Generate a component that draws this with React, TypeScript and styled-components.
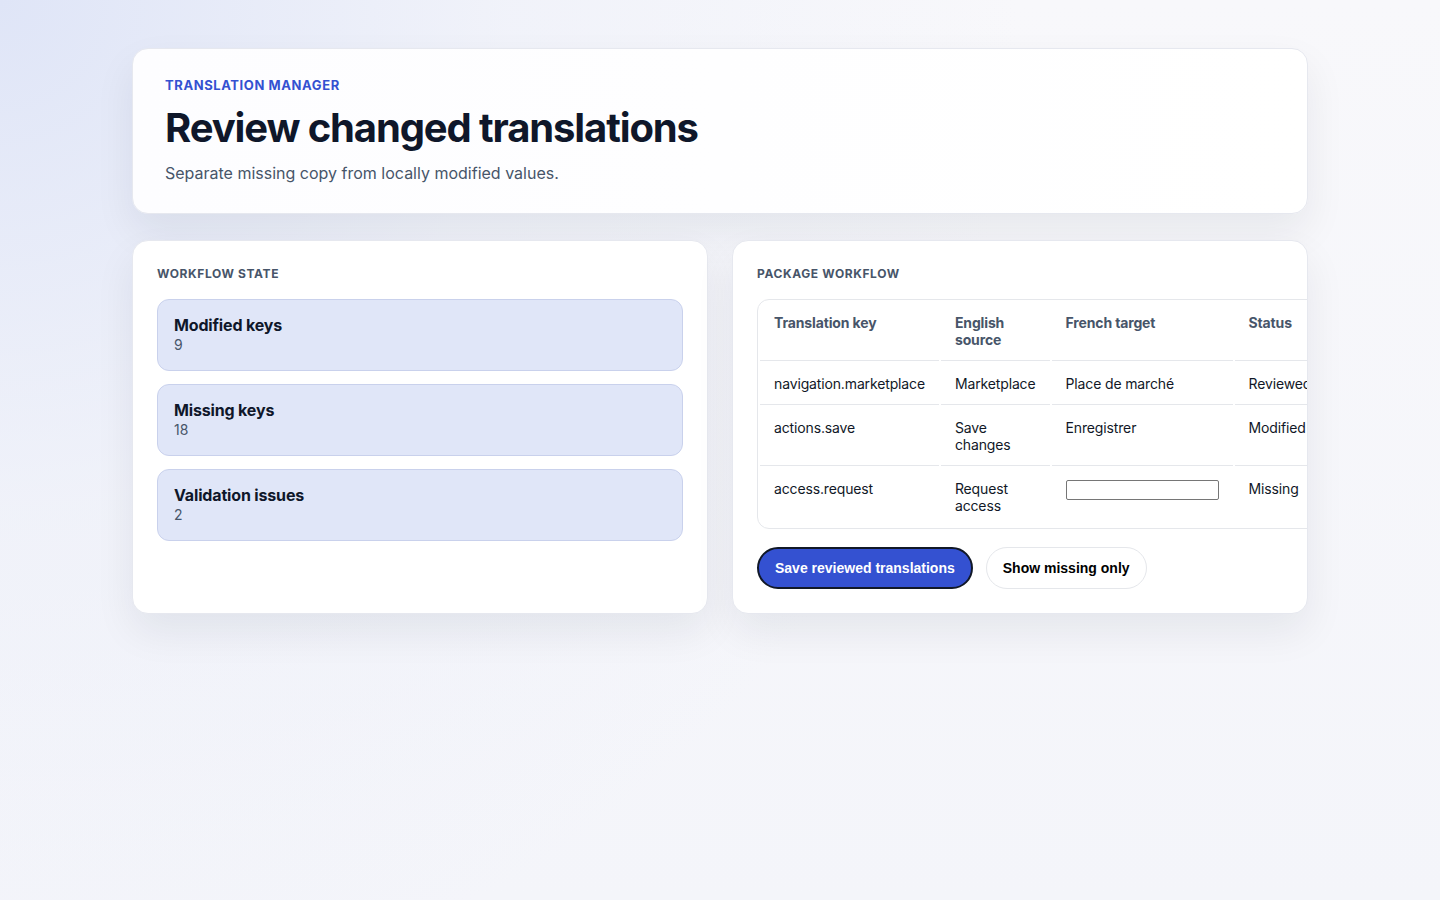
import React from "react";
import styled, { createGlobalStyle } from "styled-components";

const GlobalStyle = createGlobalStyle`
  html, body {
    margin: 0;
    min-height: 100%;
  }
  body {
    min-height: 100vh;
    font-family: Inter, "Noto Sans", Arial, sans-serif;
    color: #0f172a;
    background:
      radial-gradient(circle at 0% 0%, #dfe5f7 0%, rgba(236, 239, 249, 0.6) 30%, rgba(247, 247, 251, 0) 60%),
      linear-gradient(180deg, #f8f8fb 0%, #f4f5fa 100%);
    background-attachment: fixed;
  }
`;

const Page = styled.main`
  max-width: 1176px;
  margin: 0 auto;
  padding: 48px 0;
  display: flex;
  flex-direction: column;
  gap: 26px;
`;

const Card = styled.section`
  background: #ffffff;
  border: 1px solid #e6e8ef;
  border-radius: 16px;
  box-shadow: 0 18px 40px rgba(15, 23, 42, 0.07);
  overflow: hidden;
`;

const Hero = styled(Card)`
  padding: 28px 32px 28px;
  background: linear-gradient(90deg, #fdfdff 0%, #ffffff 100%);
`;

const Eyebrow = styled.div`
  font-size: 13px;
  font-weight: 700;
  letter-spacing: 0.045em;
  text-transform: uppercase;
  color: #3451d1;
  line-height: 16px;
`;

const Title = styled.h1`
  margin: 12px 0 10px;
  font-size: 40px;
  line-height: 46px;
  font-weight: 700;
  letter-spacing: -0.028em;
  color: #0f172a;
`;

const Subtitle = styled.p`
  margin: 0;
  font-size: 16px;
  line-height: 24px;
  color: #475569;
`;

const Columns = styled.div`
  display: grid;
  grid-template-columns: 1fr 1fr;
  gap: 24px;
`;

const Panel = styled(Card)`
  padding: 24px;
  display: flex;
  flex-direction: column;
`;

const PanelHeading = styled.h2`
  margin: 0 0 16px;
  font-size: 12px;
  line-height: 18px;
  font-weight: 700;
  letter-spacing: 0.05em;
  text-transform: uppercase;
  color: #475569;
`;

const StatList = styled.div`
  display: flex;
  flex-direction: column;
  gap: 13px;
`;

const Stat = styled.div`
  background: #e0e6f8;
  border: 1px solid #c9d1ec;
  border-radius: 12px;
  padding: 15px 16px;
`;

const StatLabel = styled.div`
  font-size: 16px;
  line-height: 20px;
  font-weight: 700;
  letter-spacing: -0.01em;
  color: #0f172a;
`;

const StatValue = styled.div`
  font-size: 14px;
  line-height: 20px;
  color: #475569;
`;

const Table = styled.table`
  width: 100%;
  border: 1px solid #e5e7eb;
  border-radius: 12px;
  font-size: 14px;
  line-height: 17px;
  letter-spacing: -0.01em;
  color: #111827;
`;

const Th = styled.th`
  text-align: left;
  vertical-align: top;
  padding: 12px 14px;
  font-weight: 700;
  color: #475569;
  border-bottom: 1px solid #e5e7eb;
`;

const Td = styled.td<{ $last?: boolean }>`
  text-align: left;
  vertical-align: top;
  padding: 12px 14px;
  border-bottom: ${(p) => (p.$last ? "none" : "1px solid #e5e7eb")};
`;

const TargetInput = styled.input`
  box-sizing: border-box;
  width: 153px;
  height: 20px;
  margin: 0;
  border: 1px solid #767676;
  border-radius: 2px;
  padding: 1px 2px;
  font-size: 13px;
  background: #ffffff;
`;

const Actions = styled.div`
  display: flex;
  gap: 13px;
  margin-top: 18px;
`;

const Button = styled.button<{ $primary?: boolean }>`
  height: 42px;
  padding: 0 16px;
  border-radius: 999px;
  font-family: "Liberation Sans", Arial, sans-serif;
  font-size: 14px;
  font-weight: 700;
  cursor: pointer;
  background: ${(p) => (p.$primary ? "#3451d1" : "#ffffff")};
  color: ${(p) => (p.$primary ? "#ffffff" : "#000000")};
  border: ${(p) => (p.$primary ? "2px solid #111827" : "1px solid #e5e7eb")};
`;

const stats = [
  { label: "Modified keys", value: 9 },
  { label: "Missing keys", value: 18 },
  { label: "Validation issues", value: 2 },
];

const rows = [
  { key: "navigation.marketplace", en: "Marketplace", fr: "Place de marché", status: "Reviewed" },
  { key: "actions.save", en: "Save changes", fr: "Enregistrer", status: "Modified" },
  { key: "access.request", en: "Request access", fr: null, status: "Missing" },
];

export default function App() {
  return (
    <>
      <GlobalStyle />
      <Page>
        <Hero>
          <Eyebrow>Translation manager</Eyebrow>
          <Title>Review changed translations</Title>
          <Subtitle>Separate missing copy from locally modified values.</Subtitle>
        </Hero>
        <Columns>
          <Panel>
            <PanelHeading>Workflow state</PanelHeading>
            <StatList>
              {stats.map((s) => (
                <Stat key={s.label}>
                  <StatLabel>{s.label}</StatLabel>
                  <StatValue>{s.value}</StatValue>
                </Stat>
              ))}
            </StatList>
          </Panel>
          <Panel>
            <PanelHeading>Package workflow</PanelHeading>
            <Table>
              <thead>
                <tr>
                  <Th>Translation key</Th>
                  <Th>English source</Th>
                  <Th>French target</Th>
                  <Th>Status</Th>
                </tr>
              </thead>
              <tbody>
                {rows.map((r, i) => {
                  const last = i === rows.length - 1;
                  return (
                    <tr key={r.key}>
                      <Td $last={last}>{r.key}</Td>
                      <Td $last={last}>{r.en}</Td>
                      <Td $last={last}>
                        {r.fr ?? <TargetInput aria-label={`French for ${r.key}`} />}
                      </Td>
                      <Td $last={last}>{r.status}</Td>
                    </tr>
                  );
                })}
              </tbody>
            </Table>
            <Actions>
              <Button $primary>Save reviewed translations</Button>
              <Button>Show missing only</Button>
            </Actions>
          </Panel>
        </Columns>
      </Page>
    </>
  );
}
